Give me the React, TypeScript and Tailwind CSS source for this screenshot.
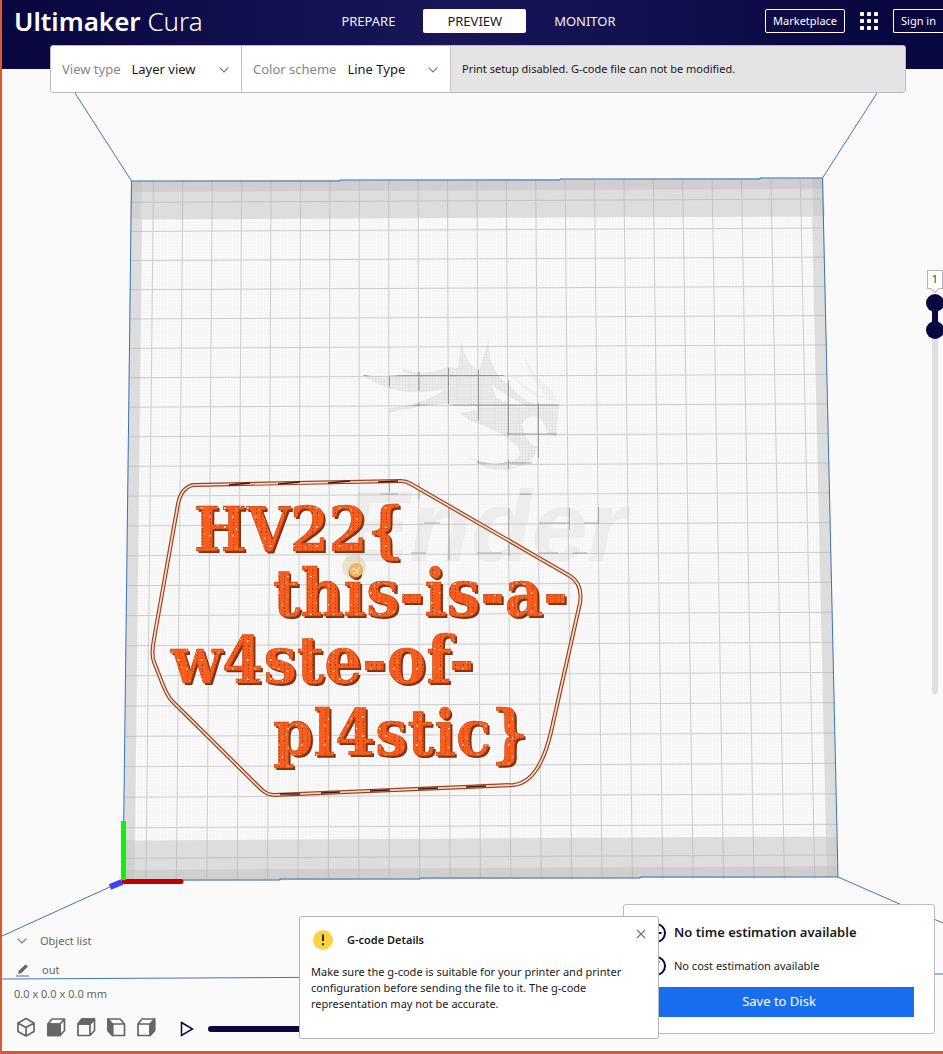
import React from "react";

const steps = Array.from({ length: 23 }, (_, i) => i);

function Chevron({ className = "" }: { className?: string }) {
  return (
    <svg viewBox="0 0 10 6" className={`h-[6px] w-[10px] ${className}`} fill="none" stroke="#777" strokeWidth="1.2" aria-hidden="true">
      <path d="M.7.7 5 5 9.3.7" />
    </svg>
  );
}

function BuildPlate() {
  const outline =
    "M193 485 L401 481 Q406 481 411 484 L570 576 Q583 584 580 603 L551 732 Q539 783 513 785 L274 795 Q268 795 262 790 L172 701 Q168 697 163 685 L154 662 Q151 655 154 639 L178 504 Q181 488 193 485 Z";
  const label = (
    <>
      <text x="194" y="551" fontSize="62">HV22{"{"}</text>
      <text x="273" y="616" fontSize="66">this-is-a-</text>
      <text x="171" y="683" fontSize="66">w4ste-of-</text>
      <text x="273" y="755" fontSize="64">pl4stic{"}"}</text>
    </>
  );
  return (
    <svg
      viewBox="2 0 941 1051"
      preserveAspectRatio="xMidYMid slice"
      className="absolute inset-0 h-full w-full"
      role="img"
      aria-label="Layer preview"
    >
      <defs>
        <pattern id="mesh" width="3" height="3" patternUnits="userSpaceOnUse">
          <rect width="3" height="3" fill="#fafafa" />
          <path d="M0 .5H3M.5 0V3" stroke="#f5f5f5" strokeWidth="1" />
        </pattern>
        <pattern id="darkmesh" width="3" height="3" patternUnits="userSpaceOnUse">
          <rect width="3" height="3" fill="#eeeeee" />
          <path d="M0 .5H3M.5 0V3" stroke="#e3e3e3" strokeWidth="1" />
        </pattern>
        <pattern id="plastic" width="23" height="19" patternUnits="userSpaceOnUse">
          <rect width="23" height="19" fill="#f95c1b" />
          <path d="M3.5 0V19M8.5 0V19M13.5 0V19M18.5 0V19" stroke="#a63a0e" strokeWidth="1" strokeDasharray="1 2" />
          <path d="M2 3h1.500v1.500H2zM11 6h2v1h-2zM17 13h1.500v2H17zM6 15h1v1.500H6zM20 2h1v1h-1zM10 12h1v1h-1z" fill="#ffe6cf" />
        </pattern>
        <clipPath id="dragonclip">
          <path d="M361 374 Q378 379 412 373 L448 368 L459 366 L461 342 L472 368 L481 370 L489 340 Q490 366 514 385 L538 403 L559 404 L557 438 Q540 462 518 470 L482 466 L468 456 Q496 470 510 459 Q519 447 506 433 Q485 421 460 414 L478 412 L448 404 Q418 404 389 412 Q433 401 449 388 Q398 397 361 374Z" />
        </clipPath>
      </defs>

      <g stroke="#4277b5" strokeWidth="1" fill="none">
        <path d="M75 93 131.500 181M877 93 822.500 178M2 936 123 881M838 877 943 923M2 979 943 974" />
      </g>

      <path d="M131 181 823 178 838 877 123 881Z" fill="#dddddd" />
      <path d="M131 181 823 178 823 189 131 192Z" fill="#cfcfcf" />
      <path d="M123 870 838 866 838 877 123 881Z" fill="#cfcfcf" />
      <path d="M131 181 142 181 141 219 130 219ZM812 178 823 178 825 216 813 216ZM124 840 135 840 134 881 123 881ZM826 837 837 837 838 877 827 877Z" fill="#bbb" opacity=".35" />
      <path d="M142 219.500 812 216.500 826 836.500 135 840.500Z" fill="url(#mesh)" />

      <g fill="url(#darkmesh)">
        <path d="M361 374 Q380 381 413 374 Q395 372 405 369 Q421 377 448 367 L458 368 L461 341 Q466 365 479 371 L489 339 Q487 370 508 384 Q519 397 535 405 L559 404 L556 438 Q547 430 539 438 L535 455 Q520 475 486 468 L467 456 Q492 468 505 461 Q527 460 517 446 Q501 430 470 421 L460 413 L479 410 L474 405 Q444 400 389 413 L389 408 Q428 403 444 389 Q395 400 361 374Z" />
        <path d="M522 350 Q528 369 543 382 Q554 390 557 401 Q530 400 514 377 Q531 391 547 398 Q527 374 522 350Z" opacity=".5" />
      </g>
      <path d="M492 386 Q514 399 526 407 Q507 405 496 397ZM522 424 Q530 411 543 421 L551 443 Q529 456 522 424ZM490 445 Q501 463 520 467 Q491 466 490 445Z" fill="#f7f7f7" />

      <text x="343" y="561" fontSize="100" fill="#ededed" className="font-['Liberation_Sans'] font-bold italic">
        Ender
      </text>

      <g stroke="#b4b4b4" strokeWidth="1" opacity=".62">
        {steps.map((i) => (
          <line key={`v${i}`} x1={153.5 + i * 29.4} y1="180" x2={146 + i * 30.4} y2="879" />
        ))}
        {steps.map((i) => {
          const y = 202.4 + i * 29 + i * i * 0.037;
          return <line key={`h${i}`} x1={130.5 - i * 0.33} y1={y} x2={823.5 + i * 0.66} y2={y - 3.4} />;
        })}
      </g>
      <g stroke="#777" strokeWidth="1" opacity=".65" clipPath="url(#dragonclip)">
        <path d="M360 375.500H560M380 405H560M480 434H560M470 463H550M389.500 370V415M419 370V415M448.500 365V430M478.500 365V470M508.500 380V470M538.500 395V460" />
      </g>
      <path d="M520 494H531M380 494H398M424 523H440M539 523H569M584 523H599M598.500 507V523M411 553H426M477 553H502M538 553H558M573 553H587M389.500 483V492M419 483V499M449 508V560M509 508V556M569.500 508V530" stroke="#777" opacity=".55" />

      <path d="M131.500 181 H340 V180 H560 V179 H760 V178 H822.500 L838 877 H640 V878 H420 V879 H280 V880 H123Z" fill="none" stroke="#3a73bd" strokeWidth="1" />

      <path d="M181 881.500H124" stroke="#bd0000" strokeWidth="5" strokeLinecap="round" />
      <path d="M123.500 821V880" stroke="#0cf20c" strokeWidth="5" />
      <path d="M122 882 110 887" stroke="#4141f2" strokeWidth="6" />

      <path d={outline} fill="none" stroke="#a04019" strokeWidth="4" />
      <path d={outline} fill="none" stroke="#fbe3d6" strokeWidth="1.600" />
      <path d="M229 485 250 483M278 484 300 482M328 483 350 481M378 482 398 481M280 794 300 794M321 793 340 792M370 791 390 790M418 789 438 788M466 787 486 786" stroke="#3d1d10" strokeWidth="1.500" />

      <circle cx="354" cy="567" r="12" fill="#d8cfaa" opacity=".5" />

      <g className="font-['DejaVu_Serif_Condensed','DejaVu_Serif',serif] font-bold">
        <g fill="#7b3311" transform="translate(2 2)">{label}</g>
        <g fill="url(#plastic)" stroke="#c44712" strokeWidth=".6">{label}</g>
      </g>

      <circle cx="356" cy="570" r="7" fill="#e8b566" />
      <path d="M351 571 354 568 357 571 360 567M353 574 356 572 359 574" fill="none" stroke="#fbe3ab" strokeWidth="1.200" />
    </svg>
  );
}

const tabs = ["PREPARE", "PREVIEW", "MONITOR"];

function Header() {
  return (
    <header className="h-[69px] bg-[linear-gradient(90deg,#08073f_0%,#191659_48%,#08073f_95%)] text-white">
      <div className="grid h-[42px] grid-cols-[1fr_auto_1fr] items-center pl-3">
        <div className="whitespace-nowrap pb-px font-['Noto_Sans'] text-[26px] leading-8">
          <span className="font-semibold">Ultimaker</span> <span className="font-light">Cura</span>
        </div>
        <nav className="flex gap-1">
          {tabs.map((t) => (
            <button
              key={t}
              type="button"
              className={
                t === "PREVIEW"
                  ? "h-6 rounded-xs bg-white px-6 pt-px text-[13px] text-[#191919]"
                  : "h-6 rounded-xs px-6 pt-px text-[13px] text-[#f1f1fb]"
              }
            >
              {t}
            </button>
          ))}
        </nav>
        <div className="flex items-center justify-end">
          <button type="button" className="h-6 rounded-xs border border-white px-[7px] text-[11px]">
            Marketplace
          </button>
          <button type="button" aria-label="Applications" className="mx-[14px]">
            <svg viewBox="0 0 20 20" className="size-5" fill="#fff">
              {[1, 8, 15].map((y) => [1, 8, 15].map((x) => <rect key={`${x}-${y}`} x={x} y={y} width="4" height="4" rx=".8" />))}
            </svg>
          </button>
          <button type="button" className="h-6 whitespace-nowrap rounded-l-xs border border-r-0 border-white px-[7px] text-[11px]">
            Sign in
          </button>
        </div>
      </div>
    </header>
  );
}

function Toolbar() {
  return (
    <div className="relative -mt-6 mr-[37px] ml-12 flex h-12 rounded-[3px] border border-[#b9b9be] bg-white text-[13px]">
      <div className="relative flex w-[191px] items-center border-r border-[#c4c4c8] pt-px pl-[11px]">
        <label htmlFor="view" className="shrink-0 text-[#868686]">View type</label>
        <select id="view" className="ml-[11px] min-w-0 grow appearance-none text-[#191919]">
          <option>Layer view</option>
        </select>
        <Chevron className="pointer-events-none absolute right-3" />
      </div>
      <div className="relative flex w-[209px] items-center border-r border-[#c4c4c8] pt-px pl-[11px]">
        <label htmlFor="scheme" className="shrink-0 text-[#868686]">Color scheme</label>
        <select id="scheme" className="ml-[11px] min-w-0 grow appearance-none text-[#191919]">
          <option>Line Type</option>
        </select>
        <Chevron className="pointer-events-none absolute right-3" />
      </div>
      <p className="flex grow items-center rounded-r-xs bg-[#e4e4e4] pl-[11px] text-[11px]">
        Print setup disabled. G-code file can not be modified.
      </p>
    </div>
  );
}

function LayerSlider() {
  return (
    <div className="relative mt-[177px] flex w-4 flex-col items-center self-end">
      <output className="relative grid h-[19px] w-4 place-items-center border border-[#b4b4b4] bg-white text-[11px] text-[#444]">
        1
        <i className="absolute -bottom-[4px] size-[6px] rotate-45 border-r border-b border-[#b4b4b4] bg-white" />
      </output>
      <svg viewBox="0 0 18 400" className="mt-[5px] h-[400px] w-[18px] shrink-0" aria-hidden="true">
        <rect x="6" y="9" width="6" height="391" rx="3" fill="#e0e0e3" />
        <path d="M9 9V36" stroke="#08073f" strokeWidth="6" />
        <circle cx="9" cy="9" r="9" fill="#08073f" />
        <circle cx="9" cy="36" r="9" fill="#08073f" />
      </svg>
      <input type="range" aria-label="Top layer" className="absolute top-6 h-5 w-4 opacity-0" />
      <input type="range" aria-label="Bottom layer" className="absolute top-[51px] h-5 w-4 opacity-0" />
    </div>
  );
}

const views = [
  { name: "3D view", shape: <path d="M10 1.500 18 6V14.500L10 19 2 14.500V6ZM2 6l8 4.500L18 6M10 10.500V19" /> },
  {
    name: "Front view",
    shape: (
      <>
        <path d="M6 2H18.500V13.500L14 18.500H2V7ZM14 7 18.500 2M2 7H14V18.500" />
        <path d="M2 7H14V18.500H2Z" fill="#666" />
      </>
    ),
  },
  {
    name: "Top view",
    shape: (
      <>
        <path d="M6 2H18.500V13.500L14 18.500H2V7ZM14 7 18.500 2M2 7H14V18.500" />
        <path d="M6 2H18.500L14 7H2Z" fill="#666" />
      </>
    ),
  },
  {
    name: "Left view",
    shape: (
      <>
        <path d="M2 2H14L18.500 7V18.500H6.500L2 13.500ZM6.500 7H18.500M6.500 7V18.500" />
        <path d="M2 2 6.500 7V18.500L2 13.500Z" fill="#666" />
      </>
    ),
  },
  {
    name: "Right view",
    shape: (
      <>
        <path d="M6 2H18.500V13.500L14 18.500H2V7ZM2 7H14V18.500" />
        <path d="M14 7 18.500 2V13.500L14 18.500Z" fill="#666" />
      </>
    ),
  },
];

function ObjectPanel() {
  return (
    <section className="flex grow flex-col pl-3 text-[11px] text-[#666]">
      <button type="button" className="flex h-[18px] items-center self-start">
        <Chevron className="mr-3 ml-[3px]" />
        <span className="pl-[1px]">Object list</span>
      </button>
      <button type="button" className="mt-[11px] flex h-[18px] items-center self-start">
        <svg viewBox="0 0 14 14" className="mr-3 ml-[2px] size-[14px]" aria-hidden="true">
          <path d="M2 11 3 7.500 9.500 1.500 12 3.500 5.500 10Z" fill="#666" />
          <path d="M0 13H13" stroke="#666" />
        </svg>
        out
      </button>
      <p className="mt-[6px] leading-[18px]">0.0 x 0.0 x 0.0 mm</p>
      <div className="mt-[13px] flex items-center gap-[10px] pl-[2px]">
        {views.map((v) => (
          <button key={v.name} type="button" aria-label={v.name}>
            <svg viewBox="0 0 20 20" className="size-5" fill="none" stroke="#666" strokeWidth="1.7" strokeLinejoin="round">
              {v.shape}
            </svg>
          </button>
        ))}
        <button type="button" aria-label="Play" className="mt-[5px] ml-[14px]">
          <svg viewBox="0 0 14 16" className="h-4 w-[14px]" fill="none" stroke="#08073f" strokeWidth="1.5">
            <path d="M1.500 1.500 12.500 8 1.500 14.500Z" />
          </svg>
        </button>
        <input
          type="range"
          aria-label="Path position"
          className="mt-[5px] ml-1 h-[6px] min-w-0 grow appearance-none rounded-full bg-[#08073f] [&::-webkit-slider-thumb]:appearance-none"
        />
      </div>
    </section>
  );
}

function ActionPanel() {
  return (
    <section className="mr-2 mb-[3px] h-[130px] w-[312px] shrink-0 rounded-[3px] border border-[#bcbcc0] bg-white px-5 pt-[17px] text-[#191919]">
      <h2 className="flex h-[22px] items-center text-[13px] font-semibold">
        <svg viewBox="0 0 20 20" className="mr-2 ml-[2px] size-5" fill="none" stroke="#08073f" strokeWidth="2" aria-hidden="true">
          <circle cx="10" cy="10" r="9" />
          <path d="M10 4V10H15.500" />
        </svg>
        <span>No time estimation available</span>
      </h2>
      <p className="mt-[11px] flex h-[22px] items-center text-[11px]">
        <svg viewBox="0 0 20 20" className="mr-2 ml-[2px] size-5" fill="none" stroke="#08073f" strokeWidth="2" aria-hidden="true">
          <circle cx="10" cy="10" r="9" />
          <path d="M13.500 6Q8 3.500 7.500 8V14.500H13M5.500 10.500H11" strokeWidth="1.5" />
        </svg>
        <span>No cost estimation available</span>
      </p>
      <button type="button" className="mt-[10px] h-[30px] w-full bg-[#196ef0] text-[13px] text-white">
        Save to Disk
      </button>
    </section>
  );
}

function GcodeMessage() {
  return (
    <section role="dialog" aria-labelledby="gcode-title" className="absolute right-[284px] bottom-3 h-[123px] w-[360px] rounded-[3px] border border-[#b4b4b8] bg-white px-[11px] pt-3 text-[#191919]">
      <div className="flex h-[22px] items-center">
        <svg viewBox="0 0 20 20" className="mr-[14px] ml-[2px] size-5" aria-hidden="true">
          <circle cx="10" cy="10" r="10" fill="#fbd341" />
          <path d="M10 4.500V11M10 13.300V15.300" stroke="#191919" strokeWidth="1.8" />
        </svg>
        <h2 id="gcode-title" className="text-[11px] font-semibold">G-code Details</h2>
        <button type="button" aria-label="Close" className="mr-[1px] mb-3 ml-auto">
          <svg viewBox="0 0 10 10" className="size-[10px]" stroke="#777" strokeWidth="1.2">
            <path d="M1 1 9 9M9 1 1 9" />
          </svg>
        </button>
      </div>
      <p className="mt-[13px] text-[11px] leading-4">
        Make sure the g-code is suitable for your printer and printer configuration before sending the file to it. The g-code
        representation may not be accurate.
      </p>
    </section>
  );
}

export default function App() {
  return (
    <div className="relative flex min-h-screen flex-col overflow-hidden border-b-3 border-l-2 border-b-[#d4583a] border-l-[#e0592a] bg-[#fafafa] font-['Noto_Sans',sans-serif] text-[#191919]">
      <BuildPlate />
      <div className="relative flex grow flex-col">
        <Header />
        <Toolbar />
        <LayerSlider />
        <div className="relative mt-auto flex items-end pb-[14px]">
          <div className="flex grow self-end">
            <ObjectPanel />
          </div>
          <ActionPanel />
          <GcodeMessage />
        </div>
      </div>
    </div>
  );
}
